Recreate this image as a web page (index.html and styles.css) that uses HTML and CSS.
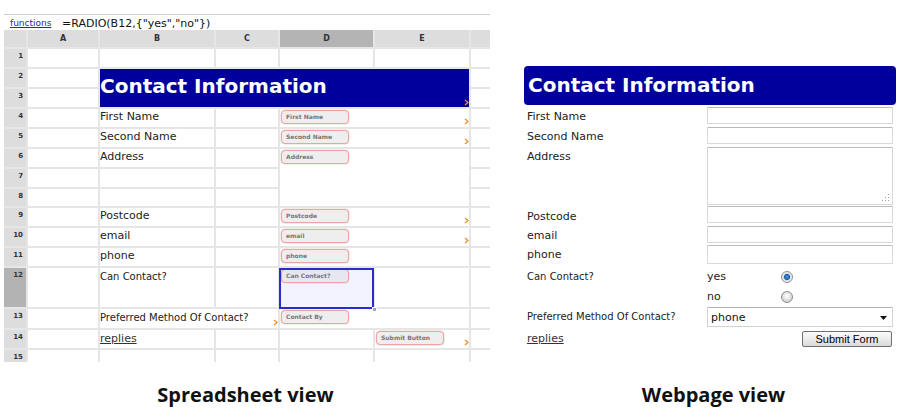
FILE: index.html
```html
<!DOCTYPE html>
<html>
<head>
<meta charset="utf-8">
<title>Spreadsheet and Webpage view</title>
<link rel="stylesheet" href="styles.css">
</head>
<body>
<div class="views">
  <div class="sheet">
    <div class="fbar"><a class="fn">functions</a><span class="formula">=RADIO(B12,{"yes","no"})</span></div>
    <table class="grid">
      <colgroup><col class="c-rh"><col class="c-a"><col class="c-b"><col class="c-c"><col class="c-d"><col class="c-e"><col class="c-f"></colgroup>
      <tr class="h18"><th class="ch corner"></th><th class="ch">A</th><th class="ch">B</th><th class="ch">C</th><th class="ch sel">D</th><th class="ch">E</th><th class="ch"></th></tr>
      <tr class="h20"><th class="rh">1</th><td></td><td></td><td></td><td></td><td></td><td></td></tr>
      <tr class="h20"><th class="rh">2</th><td></td><td class="title" colspan="4" rowspan="2">Contact Information<svg class="arr" width="5" height="7" viewBox="0 0 5 7"><path d="M1 1 L4 3.5 L1 6" fill="none" stroke="#f0902a" stroke-width="1.3"/></svg></td><td></td></tr>
      <tr class="h20"><th class="rh">3</th><td></td><td></td></tr>
      <tr class="h20"><th class="rh">4</th><td></td><td class="lb">First Name</td><td></td><td class="fc" colspan="2"><span class="fld">First Name</span><svg class="arr" width="5" height="7" viewBox="0 0 5 7"><path d="M1 1 L4 3.5 L1 6" fill="none" stroke="#f0902a" stroke-width="1.3"/></svg></td><td></td></tr>
      <tr class="h20"><th class="rh">5</th><td></td><td class="lb">Second Name</td><td></td><td class="fc" colspan="2"><span class="fld">Second Name</span><svg class="arr" width="5" height="7" viewBox="0 0 5 7"><path d="M1 1 L4 3.5 L1 6" fill="none" stroke="#f0902a" stroke-width="1.3"/></svg></td><td></td></tr>
      <tr class="h20"><th class="rh">6</th><td></td><td class="lb">Address</td><td></td><td class="fc" colspan="2" rowspan="3"><span class="fld">Address</span></td><td></td></tr>
      <tr class="h20"><th class="rh">7</th><td></td><td></td><td></td><td></td></tr>
      <tr class="h19"><th class="rh">8</th><td></td><td></td><td></td><td></td></tr>
      <tr class="h20"><th class="rh">9</th><td></td><td class="lb">Postcode</td><td></td><td class="fc" colspan="2"><span class="fld">Postcode</span><svg class="arr" width="5" height="7" viewBox="0 0 5 7"><path d="M1 1 L4 3.5 L1 6" fill="none" stroke="#f0902a" stroke-width="1.3"/></svg></td><td></td></tr>
      <tr class="h20"><th class="rh">10</th><td></td><td class="lb">email</td><td></td><td class="fc" colspan="2"><span class="fld">email</span><svg class="arr" width="5" height="7" viewBox="0 0 5 7"><path d="M1 1 L4 3.5 L1 6" fill="none" stroke="#f0902a" stroke-width="1.3"/></svg></td><td></td></tr>
      <tr class="h20"><th class="rh">11</th><td></td><td class="lb">phone</td><td></td><td class="fc" colspan="2"><span class="fld">phone</span></td><td></td></tr>
      <tr class="h41"><th class="rh sel">12</th><td></td><td class="lb sm">Can Contact?</td><td></td><td class="fc selc"><span class="fld fld-sel">Can Contact?</span><div class="selbox"></div><div class="handle"></div></td><td></td><td></td></tr>
      <tr class="h21"><th class="rh">13</th><td></td><td class="lb sm" colspan="2">Preferred Method Of Contact?<svg class="arr" width="5" height="7" viewBox="0 0 5 7"><path d="M1 1 L4 3.5 L1 6" fill="none" stroke="#f0902a" stroke-width="1.3"/></svg></td><td class="fc" colspan="2"><span class="fld">Contact By</span></td><td></td></tr>
      <tr class="h20"><th class="rh">14</th><td></td><td class="lb lb-link"><u>replies</u></td><td></td><td></td><td class="fc"><span class="fld">Submit Button</span><svg class="arr" width="5" height="7" viewBox="0 0 5 7"><path d="M1 1 L4 3.5 L1 6" fill="none" stroke="#f0902a" stroke-width="1.3"/></svg></td><td></td></tr>
      <tr class="h20"><th class="rh">15</th><td></td><td></td><td></td><td></td><td></td><td></td></tr>
    </table>
  </div>

  <div class="web">
    <div class="wtitle">Contact Information</div>
    <div class="form">
      <span class="fl">First Name</span><input class="inp m1" type="text">
      <span class="fl">Second Name</span><input class="inp m1" type="text">
      <span class="fl">Address</span>
      <div class="ta"><textarea></textarea><svg class="grip" width="7" height="7" viewBox="0 0 7 7"><rect x="6" y="0" width="1" height="1" fill="#9a9a9a"/><rect x="6" y="3" width="1" height="1" fill="#9a9a9a"/><rect x="3" y="3" width="1" height="1" fill="#9a9a9a"/><rect x="6" y="6" width="1" height="1" fill="#9a9a9a"/><rect x="3" y="6" width="1" height="1" fill="#9a9a9a"/><rect x="0" y="6" width="1" height="1" fill="#9a9a9a"/></svg></div>
      <span class="fl">Postcode</span><input class="inp" type="text">
      <span class="fl">email</span><input class="inp m1" type="text">
      <span class="fl">phone</span><input class="inp m1 tall" type="text">
      <span class="fl sm">Can Contact?</span><label class="rad"><span class="rt">yes</span><input type="radio" name="cc" checked></label>
      <span class="fl"></span><label class="rad"><span class="rt">no</span><input type="radio" name="cc"></label>
      <span class="fl sm">Preferred Method Of Contact?</span>
      <div class="selwrap"><select><option>phone</option></select><svg class="sarr" width="7" height="4" viewBox="0 0 7 4"><path d="M0 0 H7 L3.5 4 Z" fill="#111"/></svg></div>
      <span class="fl"><u class="rep">replies</u></span><div class="btnrow"><button class="btn" type="button">Submit Form</button></div>
    </div>
  </div>
</div>
<div class="caps">
  <div class="cap cap1">Spreadsheet view</div>
  <div class="cap cap2">Webpage view</div>
</div>
</body>
</html>
```

FILE: styles.css
```css
* { box-sizing: border-box; }
html, body { margin: 0; padding: 0; background: #fff; overflow: hidden; }
body {
  width: 910px;
  height: 420px;
  font-family: "DejaVu Sans", Verdana, sans-serif;
  color: #222;
}

.views { display: flex; align-items: flex-start; height: 382px; }

/* ---------- spreadsheet ---------- */
.sheet {
  margin-left: 4px;
  margin-top: 14px;
  width: 486px;
  height: 348px;
  overflow: hidden;
}
.fbar {
  height: 16px;
  border-top: 1px solid #cfcfcf;
  display: flex;
  align-items: center;
  padding-top: 1px;
}
.fn {
  font-size: 9px;
  color: #2424c8;
  text-decoration: underline;
  margin-left: 6px;
  width: 52px;
}
.formula { font-size: 11px; color: #111; }

.grid {
  border-collapse: collapse;
  table-layout: fixed;
  width: 506px;
}
.c-rh { width: 23px; }
.c-a { width: 72px; }
.c-b { width: 116px; }
.c-c { width: 64px; }
.c-d { width: 95px; }
.c-e { width: 96px; }
.c-f { width: 40px; }

.h18 { height: 18px; }
.h19 { height: 19px; }
.h20 { height: 20px; }
.h21 { height: 21px; }
.h41 { height: 41px; }

.grid td, .grid th {
  border: 2px solid #e6e6e6;
  padding: 0;
  vertical-align: top;
  overflow: visible;
}
.grid tr:first-child th { border-top: none; }
.grid th:first-child { border-left: none; }

.ch {
  background: #dddddd;
  font-size: 8px;
  font-weight: bold;
  color: #333;
  text-align: center;
  vertical-align: middle !important;
  line-height: 10px;
}
.ch.sel { background: #b4b4b4; }
.rh {
  background: #dddddd;
  font-size: 7px;
  font-weight: bold;
  color: #333;
  text-align: right;
  padding: 3px 3px 0 0 !important;
  line-height: 8px;
}
.rh.sel { background: #b3b3b3; }

.title {
  background: #00009c;
  color: #fff;
  font-weight: bold;
  font-size: 20px;
  line-height: 24px;
  padding-top: 5px !important;
  white-space: nowrap;
  position: relative;
}
.arr { position: absolute; right: 0; bottom: 2px; display: block; }
.title .arr { bottom: 1px; }

.lb {
  font-size: 11px;
  line-height: 14px;
  padding-top: 1px !important;
  white-space: nowrap;
  color: #222;
  position: relative;
}
.lb.sm { font-size: 10px; padding-top: 2px !important; }
.lb-link { padding-top: 2px !important; color: #333; }

.fc { position: relative; }
.fld {
  display: block;
  width: 68px;
  height: 14px;
  margin: 1px 0 0 1px;
  border: 1px solid #eba3a3;
  box-shadow: 0 0 0 0.5px #f7d6d6;
  border-radius: 4px;
  background: #eeeeee;
  color: #777;
  font-size: 6px;
  font-weight: bold;
  line-height: 12px;
  padding-left: 4px;
  white-space: nowrap;
}
.selc { background: #f3f3ff; }
.fld-sel { background: #e7e7f1; }
.selbox {
  position: absolute;
  left: -1px;
  top: 0;
  right: -1px;
  bottom: -2px;
  border: 2px solid #2b2bd6;
}
.handle {
  position: absolute;
  right: -4px;
  bottom: -5px;
  width: 5px;
  height: 5px;
  background: #a8a8a8;
  border: 1px solid #fff;
}

/* ---------- webpage ---------- */
.web {
  margin-left: 34px;
  margin-top: 66px;
  width: 372px;
}
.wtitle {
  height: 39px;
  background: #00009c;
  border-radius: 4px;
  color: #fff;
  font-weight: bold;
  font-size: 20px;
  line-height: 24px;
  padding: 7px 0 0 4px;
  white-space: nowrap;
}
.form {
  display: grid;
  grid-template-columns: 183px 186px;
  grid-template-rows: 20px 20px 60px 19px 19px 22px 20px 20px 22px 20px;
  margin-top: 1px;
}
.fl {
  font-size: 11px;
  line-height: 20px;
  padding-top: 1px;
  padding-left: 3px;
  white-space: nowrap;
  color: #222;
}
.fl.sm { font-size: 10px; }
.rep { color: #333; }

.inp {
  display: block;
  width: 186px;
  height: 17px;
  margin: 0;
  border: 1px solid #d9d9d9;
  border-top-color: #bcbcbc;
  background: #fff;
  padding: 0;
}
.inp.m1 { margin-top: 1px; }
.inp.tall { height: 19px; }

.ta { position: relative; margin-top: 1px; height: 58px; }
.ta textarea {
  display: block;
  width: 100%;
  height: 100%;
  margin: 0;
  resize: none;
  border: 1px solid #d6d6d6;
  border-top-color: #bcbcbc;
  background: #fff;
}
.grip { position: absolute; right: 4px; bottom: 4px; display: block; }

.rad { display: flex; align-items: center; height: 20px; padding-top: 1px; }
.rt { width: 74px; font-size: 11px; line-height: 20px; color: #222; }
.rad input {
  appearance: none;
  -webkit-appearance: none;
  width: 12px;
  height: 12px;
  margin: 0;
  border: 1px solid #8c8c8c;
  border-radius: 50%;
  background: radial-gradient(circle at 50% 40%, #ffffff 0, #e9e9e9 3px, #cfcfcf 6px);
}
.rad input:checked {
  background: radial-gradient(circle at 50% 50%, #4a9ae6 0, #1b5fa9 2.6px, #cfd6df 3.4px, #f2f2f2 5px);
}

.selwrap { position: relative; margin-top: 1px; height: 20px; }
.selwrap select {
  appearance: none;
  -webkit-appearance: none;
  display: block;
  width: 186px;
  height: 20px;
  margin: 0;
  border: 1px solid #d3d3d3;
  border-top-color: #b4b4b4;
  border-radius: 0;
  background: #fff;
  font-family: "DejaVu Sans", Verdana, sans-serif;
  font-size: 11px;
  color: #111;
  padding: 0 0 0 3px;
}
.sarr { position: absolute; right: 6px; top: 9px; display: block; }

.btnrow { display: flex; justify-content: flex-end; padding-right: 1px; }
.btn {
  margin-top: 3px;
  width: 90px;
  height: 16px;
  padding: 0;
  border: 1px solid #6f6f6f;
  border-radius: 2px;
  background: linear-gradient(#fbfbfb, #ececec 50%, #d9d9d9);
  font-family: "Liberation Sans", Arial, sans-serif;
  font-size: 11px;
  line-height: 13px;
  color: #000;
}

/* ---------- captions ---------- */
.caps { display: flex; }
.cap {
  font-family: "Open Sans", Lato, sans-serif;
  font-weight: bold;
  font-size: 20px;
  line-height: 26px;
  text-align: center;
  color: #111;
  white-space: nowrap;
}
.cap1 { width: 491px; }
.cap2 { margin-left: 45px; width: 355px; }
```
